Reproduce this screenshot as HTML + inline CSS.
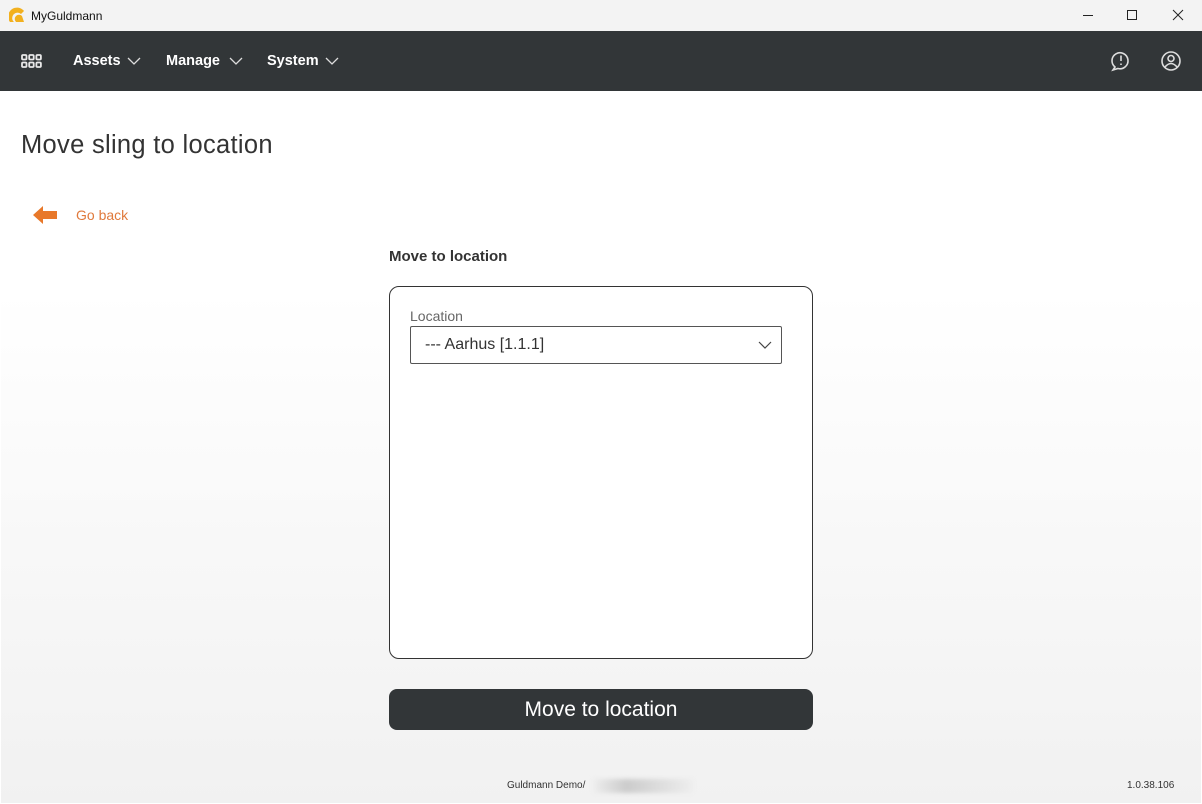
<!DOCTYPE html>
<html><head><style>
*{box-sizing:border-box;margin:0;padding:0}
body{width:1202px;height:804px;overflow:hidden;font-family:"Liberation Sans",sans-serif;background:#fff;position:relative}
.title{position:absolute;left:0;top:0;width:1202px;height:31px;background:#f3f3f3;font-size:12px;color:#111}
.nav{position:absolute;left:0;top:31px;width:1202px;height:60px;background:#323638;color:#fff}
.nav .it{position:absolute;top:22px;font-size:14.5px;font-weight:bold}
.main{position:absolute;left:1px;top:91px;width:1200px;height:712px;background:linear-gradient(#fff 0,#fff 200px,#f1f1f1 712px)}
</style></head><body>
<div class="title">
<svg style="position:absolute;left:9px;top:7px" width="16" height="16" viewBox="0 0 16 16"><path d="M1 15 A8 8 0 0 1 15 4 L12 7 A5 5 0 0 0 5 15Z" fill="#f2b01e"/><path d="M7 15 A4 4 0 0 1 13 9 L15 15Z" fill="#f2b01e"/></svg>
<span style="position:absolute;left:31px;top:9px">MyGuldmann</span>
<div style="position:absolute;left:1083px;top:15px;width:10px;height:1px;background:#222"></div>
<div style="position:absolute;left:1127px;top:10px;width:10px;height:10px;border:1px solid #222"></div>
<svg style="position:absolute;left:1172px;top:9px" width="12" height="12"><path d="M1 1L11 11M11 1L1 11" stroke="#222" stroke-width="1"/></svg>
</div>
<div class="nav">
<svg style="position:absolute;left:21px;top:23px" width="21" height="14" viewBox="0 0 21 14" fill="none" stroke="#e8e8e8" stroke-width="1.8"><rect x="1" y="1" width="4.5" height="4.5" rx="1"/><rect x="8.2" y="1" width="4.5" height="4.5" rx="1"/><rect x="15.4" y="1" width="4.5" height="4.5" rx="1"/><rect x="1" y="8.5" width="4.5" height="4.5" rx="1"/><rect x="8.2" y="8.5" width="4.5" height="4.5" rx="1"/><rect x="15.4" y="8.5" width="4.5" height="4.5" rx="1"/></svg>
<span class="it" style="left:73px">Assets</span><svg style="position:absolute;left:127px;top:26px" width="14" height="8"><path d="M1 1L7 7L13 1" stroke="#ddd" fill="none" stroke-width="1.3"/></svg>
<span class="it" style="left:166px">Manage</span><svg style="position:absolute;left:229px;top:26px" width="14" height="8"><path d="M1 1L7 7L13 1" stroke="#ddd" fill="none" stroke-width="1.3"/></svg>
<span class="it" style="left:267px">System</span><svg style="position:absolute;left:325px;top:26px" width="14" height="8"><path d="M1 1L7 7L13 1" stroke="#ddd" fill="none" stroke-width="1.3"/></svg>
<svg style="position:absolute;left:1110px;top:19px" width="22" height="22" viewBox="0 0 22 22" fill="none" stroke="#ddd" stroke-width="1.6"><path d="M5 17 A8 8 0 1 1 8 18.5 L3 20 Z"/><path d="M11 5.5V11M11 13.5V15"/></svg>
<svg style="position:absolute;left:1160px;top:19px" width="22" height="22" viewBox="0 0 22 22" fill="none" stroke="#ddd" stroke-width="1.6"><circle cx="11" cy="11" r="9"/><circle cx="11" cy="8.5" r="3"/><path d="M5 17 Q11 10 17 17"/></svg>
</div>
<div class="main">
<div style="position:absolute;left:20px;top:40px;font-size:25.5px;color:#333;letter-spacing:0.3px">Move sling to location</div>
<svg style="position:absolute;left:31px;top:114px" width="26" height="20" viewBox="0 0 26 20"><path d="M1 10L11 1V6H25V14H11V19Z" fill="#e8782a"/></svg>
<div style="position:absolute;left:75px;top:116px;font-size:14px;color:#e07a3c">Go back</div>
<div style="position:absolute;left:388px;top:157px;font-size:15px;font-weight:bold;color:#333">Move to location</div>
<div style="position:absolute;left:388px;top:195px;width:424px;height:373px;border:1px solid #333;border-radius:10px;background:#fff">
<div style="position:absolute;left:20px;top:21px;font-size:14px;color:#666">Location</div>
<div style="position:absolute;left:20px;top:39px;width:372px;height:38px;border:1px solid #555;border-radius:2px;font-size:16px;color:#333;padding:9px 14px">--- Aarhus [1.1.1]
<svg style="position:absolute;right:9px;top:14px" width="14" height="8"><path d="M1 1L7 7L13 1" stroke="#444" fill="none" stroke-width="1.2"/></svg></div>
</div>
<div style="position:absolute;left:388px;top:598px;width:424px;height:41px;background:#323638;border-radius:8px;color:#fff;font-size:21px;text-align:center;line-height:41px">Move to location</div>
<div style="position:absolute;left:506px;top:689px;font-size:10px;color:#333">Guldmann Demo/</div>
<div style="position:absolute;left:592px;top:688px;width:100px;height:14px;background:linear-gradient(90deg,#eee,#ccc,#ddd,#eee);filter:blur(2px)"></div>
<div style="position:absolute;left:1126px;top:689px;font-size:10px;color:#333">1.0.38.106</div>
</div>
</body></html>
